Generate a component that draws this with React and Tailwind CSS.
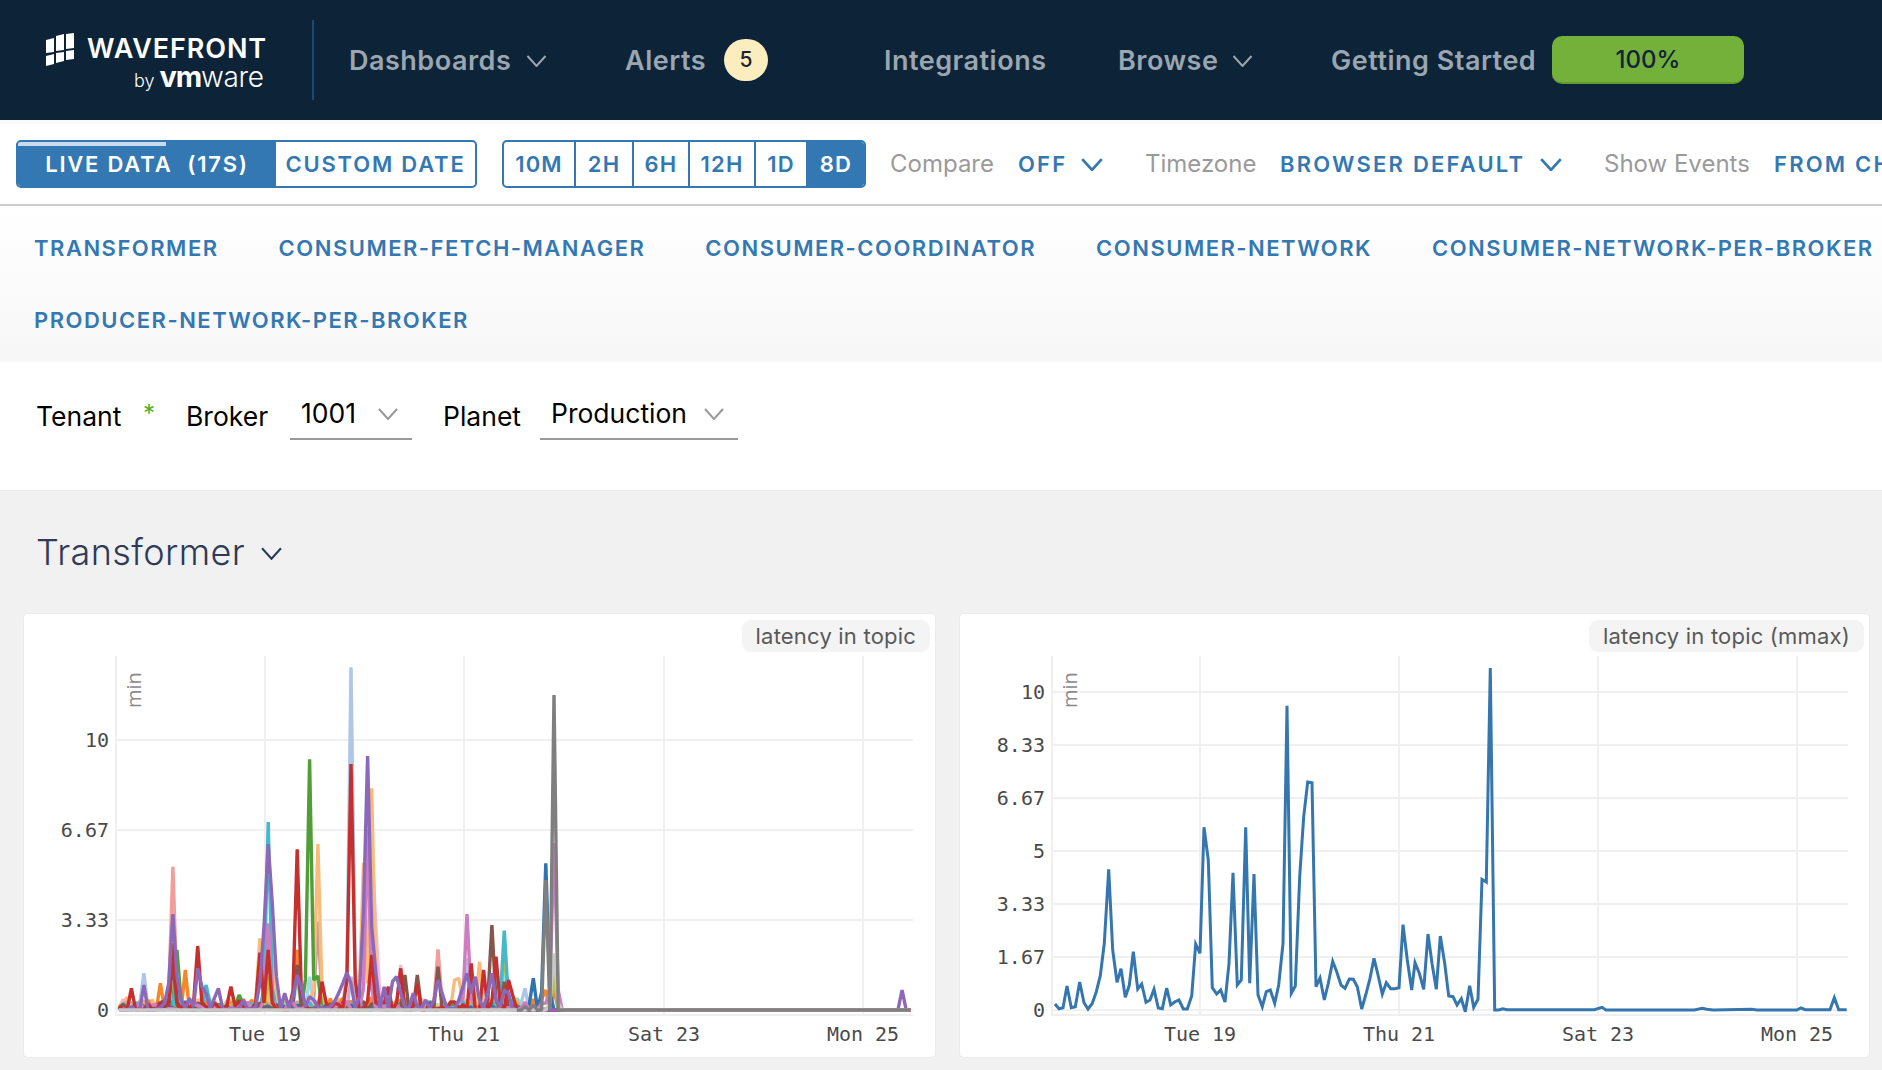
import React from 'react';

const BLUE = '#3576ae';

const Chevron = ({ className, strokeWidth = 2 }) => (
  <svg viewBox="0 0 20 12" fill="none" stroke="currentColor" strokeWidth={strokeWidth} className={`shrink-0 ${className}`}>
    <polyline points="1,1 10,11 19,1" />
  </svg>
);

const Logo = () => (
  <div className="relative w-[220px] h-[60px] text-white">
    <svg viewBox="0 0 28 33" className="absolute left-0 top-[3px] w-[28px] h-[33px]" fill="#fff">
      <polygon points="0,7 8,5 8,19 0,20" />
      <polygon points="0,23 8,21 8,31 0,33" />
      <polygon points="10,3 18,1 18,17 10,18" />
      <polygon points="10,20 18,19 18,28 10,30" />
      <polygon points="20,1 28,0 28,15 20,16" />
      <polygon points="20,18 28,17 28,26 20,27" />
    </svg>
    <span className="absolute left-[41px] top-[6px] text-[27px] leading-[26px] font-semibold tracking-[0.9px] whitespace-nowrap">WAVEFRONT</span>
    <div className="absolute left-[88px] top-[34px] flex items-baseline whitespace-nowrap leading-[26px]">
      <span className="text-[18px] font-light">by</span>
      <span className="text-[29px] font-bold ml-[5px] tracking-[-1.2px]">vm</span>
      <span className="text-[28px] font-light tracking-[-0.3px]">ware</span>
    </div>
  </div>
);

const NAV_TEXT = 'shrink-0 tracking-[0.5px] mt-[2px]';

const Header = () => (
  <header className="h-[120px] bg-[#0c2338] flex items-center text-[#9ba6b0] text-[27px] font-semibold whitespace-nowrap overflow-hidden">
    <div className="ml-[46px] shrink-0">
      <Logo />
    </div>
    <div className="w-[2px] h-[80px] bg-[#1c4a6c] ml-[46px] shrink-0" />
    <span className={`${NAV_TEXT} ml-[35px] w-[163px]`}>Dashboards</span>
    <Chevron className="w-[21px] h-[12px] ml-[14px] mt-[2px]" />
    <span className={`${NAV_TEXT} ml-[78px] w-[80px]`}>Alerts</span>
    <span className="ml-[19px] w-[44px] h-[42px] shrink-0 rounded-full bg-[#fbedbe] text-[#1c2433] text-[21px] font-medium flex items-center justify-center">5</span>
    <span className={`${NAV_TEXT} ml-[116px] w-[162px]`}>Integrations</span>
    <span className={`${NAV_TEXT} ml-[72px] w-[100px]`}>Browse</span>
    <Chevron className="w-[21px] h-[12px] ml-[14px] mt-[2px]" />
    <span className={`${NAV_TEXT} ml-[78px] w-[208px]`}>Getting Started</span>
    <div className="ml-[13px] w-[192px] h-[48px] pt-[2px] shrink-0 rounded-[10px] bg-[#74b13b] border-b-2 border-b-[#629a30] text-[#12233a] text-[24px] font-medium flex items-center justify-center">100%</div>
  </header>
);

const LABEL = 'shrink-0 text-[24px] text-[#9a9a9a] font-normal';
const VALUE = 'shrink-0 text-[22px] text-[#3478b3] font-semibold tracking-[2.2px]';
const RANGES = [
  ['10M', 'w-[72px]'],
  ['2H', 'w-[58px]'],
  ['6H', 'w-[56px]'],
  ['12H', 'w-[66px]'],
  ['1D', 'w-[52px]'],
];

const Toolbar = () => (
  <div className="h-[86px] border-t-4 border-t-[#fafafa] border-b-2 border-b-[#cccccc] flex items-center whitespace-nowrap overflow-hidden font-semibold">
    <div className="ml-[16px] w-[461px] h-[48px] shrink-0 flex rounded-[5px] border-2 border-[#3478b3] overflow-hidden text-[22px] tracking-[1.8px]">
      <div className="relative w-[258px] bg-[#3478b3] text-white flex items-center justify-center">
        <div className="absolute left-0 top-0 w-[148px] h-[4px] bg-[#c9dbec]" />
        LIVE DATA&nbsp; (17S)
      </div>
      <div className="flex-1 flex items-center justify-center text-[#3478b3]">CUSTOM DATE</div>
    </div>
    <div className="ml-[25px] w-[364px] h-[48px] shrink-0 flex rounded-[5px] border-2 border-[#3478b3] overflow-hidden text-[22px] tracking-[1.2px] text-[#3478b3]">
      {RANGES.map(([label, width]) => (
        <div key={label} className={`${width} border-r-2 border-r-[#3478b3] flex items-center justify-center`}>{label}</div>
      ))}
      <div className="flex-1 bg-[#3478b3] text-white flex items-center justify-center">8D</div>
    </div>
    <span className={`${LABEL} ml-[24px] w-[128px]`}>Compare</span>
    <span className={`${VALUE} w-[63px]`}>OFF</span>
    <Chevron className="w-[22px] h-[13px] text-[#3478b3]" strokeWidth={2.5} />
    <span className={`${LABEL} ml-[42px] w-[135px]`}>Timezone</span>
    <span className={`${VALUE} w-[260px]`}>BROWSER DEFAULT</span>
    <Chevron className="w-[22px] h-[13px] text-[#3478b3]" strokeWidth={2.5} />
    <span className={`${LABEL} ml-[42px] w-[170px]`}>Show Events</span>
    <span className={VALUE}>FROM CHARTS</span>
  </div>
);

const TABS = [
  'TRANSFORMER',
  'CONSUMER-FETCH-MANAGER',
  'CONSUMER-COORDINATOR',
  'CONSUMER-NETWORK',
  'CONSUMER-NETWORK-PER-BROKER',
  'PRODUCER-NETWORK-PER-BROKER',
];

const Tabs = () => (
  <nav className="pt-[6px] pb-[6px] pl-[34px] flex flex-wrap gap-x-[60px] bg-gradient-to-b from-white to-[#f7f7f7]">
    {TABS.map((tab) => (
      <span key={tab} className="h-[72px] flex items-center text-[22px] font-semibold tracking-[1.5px] text-[#3478b3] whitespace-nowrap">{tab}</span>
    ))}
  </nav>
);

const Select = ({ value, className }) => (
  <div className={`h-[50px] border-b-2 border-b-[#999999] flex items-center pl-[11px] pr-[14px] justify-between ${className}`}>
    <span className="text-[26.5px] text-black -mt-[1px]">{value}</span>
    <Chevron className="w-[20px] h-[12px] text-[#999999]" strokeWidth={2} />
  </div>
);

const Filters = () => (
  <div className="h-[128px] bg-white flex items-start pt-[28px] pl-[36px] text-[26.5px] text-black whitespace-nowrap">
    <span className="w-[108px] h-[50px] pt-[4px] flex items-center relative">
      Tenant
      <span className="absolute left-[107px] top-[6px] text-[#4caf28] text-[24px]">*</span>
    </span>
    <span className="ml-[42px] w-[104px] h-[50px] pt-[4px] flex items-center">Broker</span>
    <Select value="1001" className="w-[122px]" />
    <span className="ml-[31px] w-[97px] h-[50px] pt-[4px] flex items-center">Planet</span>
    <Select value="Production" className="w-[198px]" />
  </div>
);

// read off the reference at 3x, baseline of the chart sits at y=1200
const MMAX_LEFT = [[315,1182],[327,1196],[339,1193],[351,1128],[364,1193],[376,1190],[389,1116],[402,1178],[414,1197],[427,1180],[439,1145],[451,1097],[463,1000],[476,778],[488,1020],[501,1117],[513,1076],[526,1162],[538,1126],[550,1025],[563,1137],[575,1122],[588,1177],[600,1170],[612,1138],[625,1194],[637,1196],[650,1134],[662,1185],[675,1175],[687,1170],[700,1197],[712,1197],[725,1158],[737,1002],[750,1030],[762,652],[775,750],[787,1133],[800,1152],[812,1140],[825,1176],[837,1060],[849,788],[862,1125],[874,1110],[887,652],[899,1120],[912,792],[924,1155],[937,1190],[949,1145],[961,1140],[974,1180],[986,1125],[999,1000],[1011,287],[1024,1150],[1036,1128],[1049,800],[1061,620],[1073,516],[1086,518],[1098,1130],[1110,1104],[1123,1170],[1135,1120],[1148,1054],[1160,1085],[1173,1125],[1185,1135],[1198,1107],[1210,1108],[1222,1130],[1235,1197],[1247,1155],[1260,1105],[1272,1045],[1284,1095],[1297,1152],[1309,1118],[1322,1136],[1334,1136],[1347,1133],[1359,944],[1372,1050]];
const MMAX_RIGHT = [[5,1140],[15,1058],[28,1090],[41,1138],[54,972],[66,1060],[79,1138],[91,978],[104,1060],[116,1158],[129,1160],[141,1185],[154,1166],[166,1205],[179,1127],[191,1192],[204,1168],[216,808],[229,816],[241,174],[254,1200],[266,1200],[278,1196],[291,1199],[553,1199],[576,1192],[588,1200],[853,1200],[877,1195],[890,1198],[910,1200],[1025,1198],[1040,1200],[1160,1200],[1173,1194],[1186,1199],[1260,1199],[1273,1163],[1286,1199],[1310,1199]];

const mmaxPoints = [
  ...MMAX_LEFT.map(([x, y]) => [950 + x / 3, 610 + y / 3]),
  ...MMAX_RIGHT.map(([x, y]) => [1410 + x / 3, 610 + y / 3]),
];

const seeded = (seed) => {
  let s = seed;
  return () => (s = (s * 16807) % 2147483647) / 2147483647;
};

const LAST_POINT = 191;

// peaks: [index, y at 3x]
const makeSeries = (seed, peaks, amp = 70, start = 0, end = 96) => {
  const rnd = seeded(seed * 7919);
  const vals = [];
  for (let i = 0; i <= LAST_POINT; i++) {
    const n = rnd();
    const active = i >= start && i <= end;
    vals.push(active ? 1200 - (n < 0.5 ? n * 8 : (n - 0.5) * amp * 1.1) : 1200);
  }
  peaks.forEach(([i, y]) => {
    const h = 1200 - y;
    vals[i] = y;
    if (h > 150) {
      if (!peaks.some((p) => p[0] === i - 1)) vals[i - 1] = Math.min(vals[i - 1], 1200 - h * 0.12);
      if (!peaks.some((p) => p[0] === i + 1)) vals[i + 1] = Math.min(vals[i + 1], 1200 - h * 0.12);
    }
  });
  return vals;
};

const PURPLE = [1200,1200,1200,1190,1200,1200,1125,1200,1200,1198,1192,1180,1120,912,1100,1170,1195,1165,1190,1075,1130,1150,1195,1165,1135,1195,1198,1198,1198,1195,1170,1198,1198,1190,1120,950,702,880,1100,1195,1150,1195,1160,1095,1130,1190,1160,1170,1190,1195,1195,1190,1175,1150,1120,1088,1120,1195,1160,900,438,950,1090,1195,1130,1195,1115,1100,1150,1190,1195,1150,1190,1195,1170,1195,1170,1110,1150,1190,1195,1198,1170,1130,1090,1150,1100,1170,1195,1150,1090,1170,1190,1140,1150,1195];

const SERIES = [
  ['#c5b0d5', makeSeries(11, [[36, 1120], [56, 1100]], 50)],
  ['#c49c94', makeSeries(23, [[48, 935], [36, 1100]], 50)],
  ['#dbdb8d', makeSeries(37, [[14, 1100]], 40, 0, 102)],
  ['#9edae5', makeSeries(41, [[93, 1060], [46, 1100], [43, 1100]], 50)],
  ['#98df8a', makeSeries(53, [[96, 1165]], 40, 0, 100)],
  ['#aec7e8', makeSeries(67, [[56, 172], [6, 1090], [98, 1135], [84, 1045]], 50, 0, 100)],
  ['#f7b6d2', makeSeries(71, [[13, 1180], [60, 600], [61, 700], [62, 955], [68, 1065], [36, 1150]], 60)],
  ['#f9bb7c', makeSeries(83, [[48, 702], [61, 535], [59, 758], [34, 985], [37, 930], [87, 1055], [81, 1110], [82, 1105]], 70)],
  ['#f39c99', makeSeries(97, [[13, 770], [77, 1018]], 50)],
  ['#f5862a', makeSeries(101, [[43, 1020], [16, 1080], [10, 1120], [103, 1140], [105, 1140]], 70, 0, 105)],
  ['#4f9e38', makeSeries(113, [[46, 448], [48, 1098], [14, 1020], [29, 1155]], 40)],
  ['#bcbd3a', makeSeries(127, [[93, 1020], [36, 1100], [14, 1170], [105, 1090]], 40, 0, 105)],
  ['#45b8cc', makeSeries(131, [[36, 636], [93, 962], [21, 1125], [14, 1090]], 50)],
  ['#2f74b0', makeSeries(149, [[103, 760], [100, 1105]], 30, 0, 103)],
  ['#85574c', makeSeries(151, [[90, 945], [77, 1070], [72, 1095], [43, 1065], [13, 1050], [93, 1115], [69, 1095]], 50)],
  ['#d07cc0', makeSeries(163, [[84, 912], [36, 940], [105, 700], [60, 660]], 50, 0, 105)],
  ['#c5302f', makeSeries(173, [[56, 462], [43, 718], [13, 1000], [19, 1008], [3, 1135], [27, 1130], [34, 1028], [36, 1020], [61, 1035], [68, 1075], [72, 1122], [85, 1060], [88, 1080], [91, 1040], [95, 1155], [49, 1115], [65, 1130], [94, 1110]], 50)],
  ['#8c68b9', [...PURPLE, ...Array(LAST_POINT - PURPLE.length + 1).fill(1200).map((v, i) => (PURPLE.length + i === 189 ? 1140 : v))]],
  ['#c7c7c7', makeSeries(179, [[105, 1030]], 0, 96, 105)],
];

const toPoints = (pts) => pts.map(([x, y]) => `${x.toFixed(1)},${y.toFixed(1)}`).join(' ');

const indexPoints = (vals, from = 0) =>
  vals
    .map((y, i) => [20 + (297 + 12.43 * i) / 3, 610 + y / 3])
    .slice(from);

const GRAY_VALUES = (() => {
  const v = Array(LAST_POINT + 1).fill(1200);
  v[98] = 1190;
  v[100] = 1185;
  v[103] = 810;
  v[105] = 255;
  return v;
})();

const Grid = ({ left, right, rows, cols }) => (
  <g className="font-['DejaVu_Sans_Mono',monospace] text-[20px]">
    {rows.map(([y]) => (
      <line key={y} x1={left} x2={right} y1={y} y2={y} stroke="#f0f0f1" strokeWidth="2" />
    ))}
    {cols.map(([x]) => (
      <line key={x} x1={x} x2={x} y1={656} y2={1015} stroke="#f0f0f1" strokeWidth="2" />
    ))}
    <line x1={left} x2={left} y1={656} y2={1016} stroke="#f0f0f1" strokeWidth="2" />
    <line x1={left} x2={right} y1={1015} y2={1015} stroke="#f0f0f1" strokeWidth="2" />
    {rows.map(([y, label]) => (
      <text key={label} x={left - 7} y={y + 7} textAnchor="end" fill="#4a4a4a">{label}</text>
    ))}
    {cols.map(([x, label]) => (
      <text key={label} x={x} y={1041} textAnchor="middle" fill="#4a4a4a">{label}</text>
    ))}
    <text
      transform={`translate(${left + 25} 708) rotate(-90)`}
      className="font-['Open_Sans',sans-serif] text-[20px]"
      fill="#8a8a8a"
    >
      min
    </text>
  </g>
);

const ChartCard = ({ title, originX, children }) => (
  <div className="relative h-[445px] bg-white rounded-[5px] border border-[#e9ecef] overflow-hidden">
    <svg width="911" height="443" className="block">
      <g transform={`translate(${-originX} -614)`} fill="none">{children}</g>
    </svg>
    <div className="absolute top-[6px] right-[5px] h-[32px] px-[14px] rounded-[9px] bg-[#f4f4f5] flex items-center text-[22px] tracking-[0.2px] text-[#595959] whitespace-nowrap">{title}</div>
  </div>
);

const Section = () => (
  <section className="flex-1 bg-[#f1f1f2] border-t border-t-[#ececec] pl-[23px]">
    <div className="h-[122px] pl-[13px] flex items-center pb-[1px] text-[#2e3a57]">
      <span className="text-[36px] font-light tracking-[0.4px]">Transformer</span>
      <Chevron className="w-[21px] h-[13px] ml-[16px] mt-[4px]" strokeWidth={2} />
    </div>
    <div className="grid grid-cols-[913px_911px] gap-x-[23px]">
      <ChartCard title="latency in topic" originX={24}>
        <Grid
          left={116}
          right={913}
          rows={[[740, '10'], [830, '6.67'], [920, '3.33'], [1010, '0']]}
          cols={[[265, 'Tue 19'], [464, 'Thu 21'], [664, 'Sat 23'], [863, 'Mon 25']]}
        />
        {SERIES.map(([color, vals]) => (
          <polyline key={color} points={toPoints(indexPoints(vals))} stroke={color} strokeWidth="3.4" strokeLinejoin="bevel" />
        ))}
        <polyline points={toPoints(indexPoints(GRAY_VALUES, 96))} stroke="#7f7f7f" strokeWidth="3.4" strokeLinejoin="bevel" />
      </ChartCard>
      <ChartCard title="latency in topic (mmax)" originX={960}>
        <Grid
          left={1052}
          right={1848}
          rows={[[692, '10'], [745, '8.33'], [798, '6.67'], [851, '5'], [904, '3.33'], [957, '1.67'], [1010, '0']]}
          cols={[[1200, 'Tue 19'], [1399, 'Thu 21'], [1598, 'Sat 23'], [1797, 'Mon 25']]}
        />
        <polyline points={toPoints(mmaxPoints)} stroke={BLUE} strokeWidth="3" />
      </ChartCard>
    </div>
  </section>
);

export default function App() {
  return (
    <div className="h-screen overflow-hidden flex flex-col bg-white font-['Inter',sans-serif]">
      <Header />
      <Toolbar />
      <Tabs />
      <Filters />
      <Section />
    </div>
  );
}
